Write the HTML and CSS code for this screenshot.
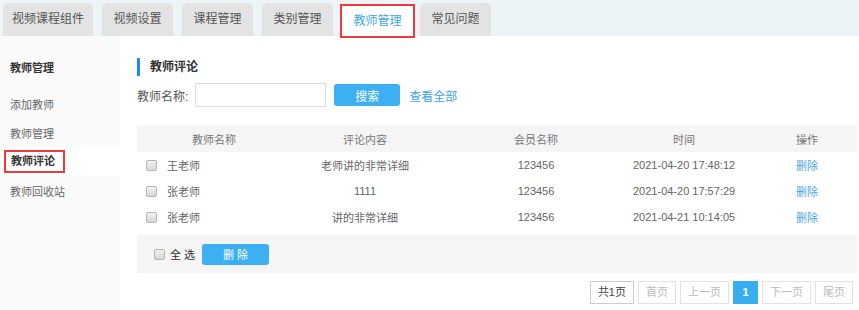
FILE: index.html
```html
<!DOCTYPE html>
<html lang="zh-CN">

<head>
  <meta charset="utf-8">
  <link rel="stylesheet" href="styles.css">
</head>

<body>
  <div class="topbar">
    <div class="tab">视频课程组件</div>
    <div class="tab">视频设置</div>
    <div class="tab">课程管理</div>
    <div class="tab">类别管理</div>
    <div class="tab active">教师管理</div>
    <div class="tab">常见问题</div>
  </div>

  <div class="layout">
    <aside class="sidebar">
      <div class="side-title">教师管理</div>
      <ul class="side-menu">
        <li>添加教师</li>
        <li>教师管理</li>
        <li class="current"><span>教师评论</span></li>
        <li>教师回收站</li>
      </ul>
    </aside>

    <main class="main">
      <h2 class="title">教师评论</h2>

      <div class="search">
        <label for="tname">教师名称:</label>
        <input type="text" id="tname" class="search-input">
        <button class="btn search-btn">搜索</button>
        <a href="#" class="show-all">查看全部</a>
      </div>

      <div class="table">
        <div class="row head">
          <div>教师名称</div>
          <div>评论内容</div>
          <div>会员名称</div>
          <div>时间</div>
          <div class="op">操作</div>
        </div>
        <div class="row">
          <div class="name"><input type="checkbox" class="check">王老师</div>
          <div>老师讲的非常详细</div>
          <div>123456</div>
          <div>2021-04-20 17:48:12</div>
          <div class="op"><a href="#">删除</a></div>
        </div>
        <div class="row">
          <div class="name"><input type="checkbox" class="check">张老师</div>
          <div>1111</div>
          <div>123456</div>
          <div>2021-04-20 17:57:29</div>
          <div class="op"><a href="#">删除</a></div>
        </div>
        <div class="row">
          <div class="name"><input type="checkbox" class="check">张老师</div>
          <div>讲的非常详细</div>
          <div>123456</div>
          <div>2021-04-21 10:14:05</div>
          <div class="op"><a href="#">删除</a></div>
        </div>
      </div>

      <div class="bulk">
        <input type="checkbox" class="check" id="all">
        <label for="all" class="all-label">全 选</label>
        <button class="btn del-btn">删 除</button>
      </div>

      <div class="pager">
        <span class="page total">共1页</span>
        <span class="page">首页</span>
        <span class="page">上一页</span>
        <span class="page on">1</span>
        <span class="page">下一页</span>
        <span class="page">尾页</span>
      </div>
    </main>
  </div>
</body>

</html>
```

FILE: styles.css
```css
* {
  box-sizing: border-box;
}

body {
  margin: 0;
  height: 100vh;
  overflow: hidden;
  font-family: "Liberation Sans", "Noto Sans CJK SC", sans-serif;
  font-size: 11px;
  color: #666;
  background-color: #fff;
}

/* top tabs */
.topbar {
  display: flex;
  align-items: flex-end;
  height: 36px;
  padding: 3px 0 0 3px;
  background-color: #ecf4f8;
}

.tab {
  min-width: 71px;
  height: 33px;
  line-height: 33px;
  padding: 0 9px;
  margin-right: 9px;
  text-align: center;
  font-size: 12px;
  color: #555;
  background-color: #e3e3e3;
  border-radius: 5px 5px 0 0;
}

.tab.active {
  height: 30px;
  line-height: 30px;
  margin: 0 7px 0 0;
  color: #3ea6e6;
  background-color: #fff;
  border-radius: 0;
  outline: 2px solid #f0393b;
}

/* layout */
.layout {
  display: flex;
  height: calc(100vh - 36px);
}

.sidebar {
  width: 120px;
  flex-shrink: 0;
  padding-top: 20px;
  background-color: #fafafa;
}

.side-title {
  height: 24px;
  line-height: 24px;
  padding-left: 10px;
  margin-bottom: 9px;
  font-weight: bold;
  color: #333;
}

.side-menu {
  list-style: none;
  margin: 0;
  padding: 0;
}

.side-menu li {
  display: flex;
  align-items: center;
  height: 29px;
  padding-left: 10px;
  color: #666;
}

.side-menu li.current {
  padding-left: 4px;
  background-color: #fff;
  font-weight: bold;
  color: #333;
}

.side-menu li.current span {
  display: inline-block;
  height: 23px;
  line-height: 19px;
  padding: 0 8px 0 5px;
  border: 2px solid #f0393b;
}

/* main */
.main {
  flex: 1;
  padding: 22px 2px 0 17px;
}

.title {
  margin: 0;
  height: 18px;
  line-height: 18px;
  padding-left: 10px;
  border-left: 3px solid #1a8cf0;
  font-size: 12px;
  font-weight: bold;
  color: #333;
}

.search {
  display: flex;
  align-items: center;
  margin-top: 7px;
  height: 24px;
}

.search label {
  font-size: 12px;
  color: #555;
}

.search-input {
  width: 131px;
  height: 24px;
  margin-left: 7px;
  border: 1px solid #ddd;
  outline: none;
}

.btn {
  border: none;
  border-radius: 3px;
  color: #fff;
  background-color: #3cb0f2;
  font-family: inherit;
  cursor: pointer;
}

.search-btn {
  width: 66px;
  height: 22px;
  margin-left: 8px;
  font-size: 12px;
}

.show-all {
  margin-left: 9px;
  font-size: 12px;
  color: #3ba6e8;
  text-decoration: none;
}

/* table */
.table {
  margin-top: 18px;
}

.row {
  display: grid;
  grid-template-columns: 154px 148px 194px 102px auto;
  align-items: center;
  height: 26px;
  text-align: center;
  white-space: nowrap;
}

.row.head {
  height: 27px;
  background-color: #f5f5f5;
  color: #777;
}

.row .name {
  display: flex;
  align-items: center;
  padding-left: 9px;
  text-align: left;
}

.row .op {
  padding-left: 22px;
}

.row a {
  color: #4aa8ea;
  text-decoration: none;
}

.check {
  appearance: none;
  -webkit-appearance: none;
  width: 11px;
  height: 11px;
  margin: 0 10px 0 0;
  border: 1px solid #b4b4b4;
  border-radius: 2px;
  background: linear-gradient(#f2f2f2, #d6d6d6);
}

.bulk {
  display: flex;
  align-items: center;
  height: 38px;
  margin-top: 5px;
  padding-left: 17px;
  background-color: #f5f5f5;
}

.bulk .check {
  margin-right: 5px;
}

.all-label {
  font-size: 11px;
  color: #333;
}

.del-btn {
  width: 67px;
  height: 21px;
  margin-left: 7px;
  font-size: 11px;
}

/* pagination */
.pager {
  display: flex;
  justify-content: flex-end;
  gap: 4px;
  margin-top: 8px;
  padding-right: 4px;
}

.page {
  min-width: 25px;
  height: 23px;
  line-height: 21px;
  padding: 0 7px;
  text-align: center;
  border: 1px solid #e2e2e2;
  color: #bbb;
}

.page.total {
  border-color: #ccc;
  color: #444;
}

.page.on {
  border-color: #36aef0;
  background-color: #36aef0;
  color: #fff;
  font-weight: bold;
}
```
